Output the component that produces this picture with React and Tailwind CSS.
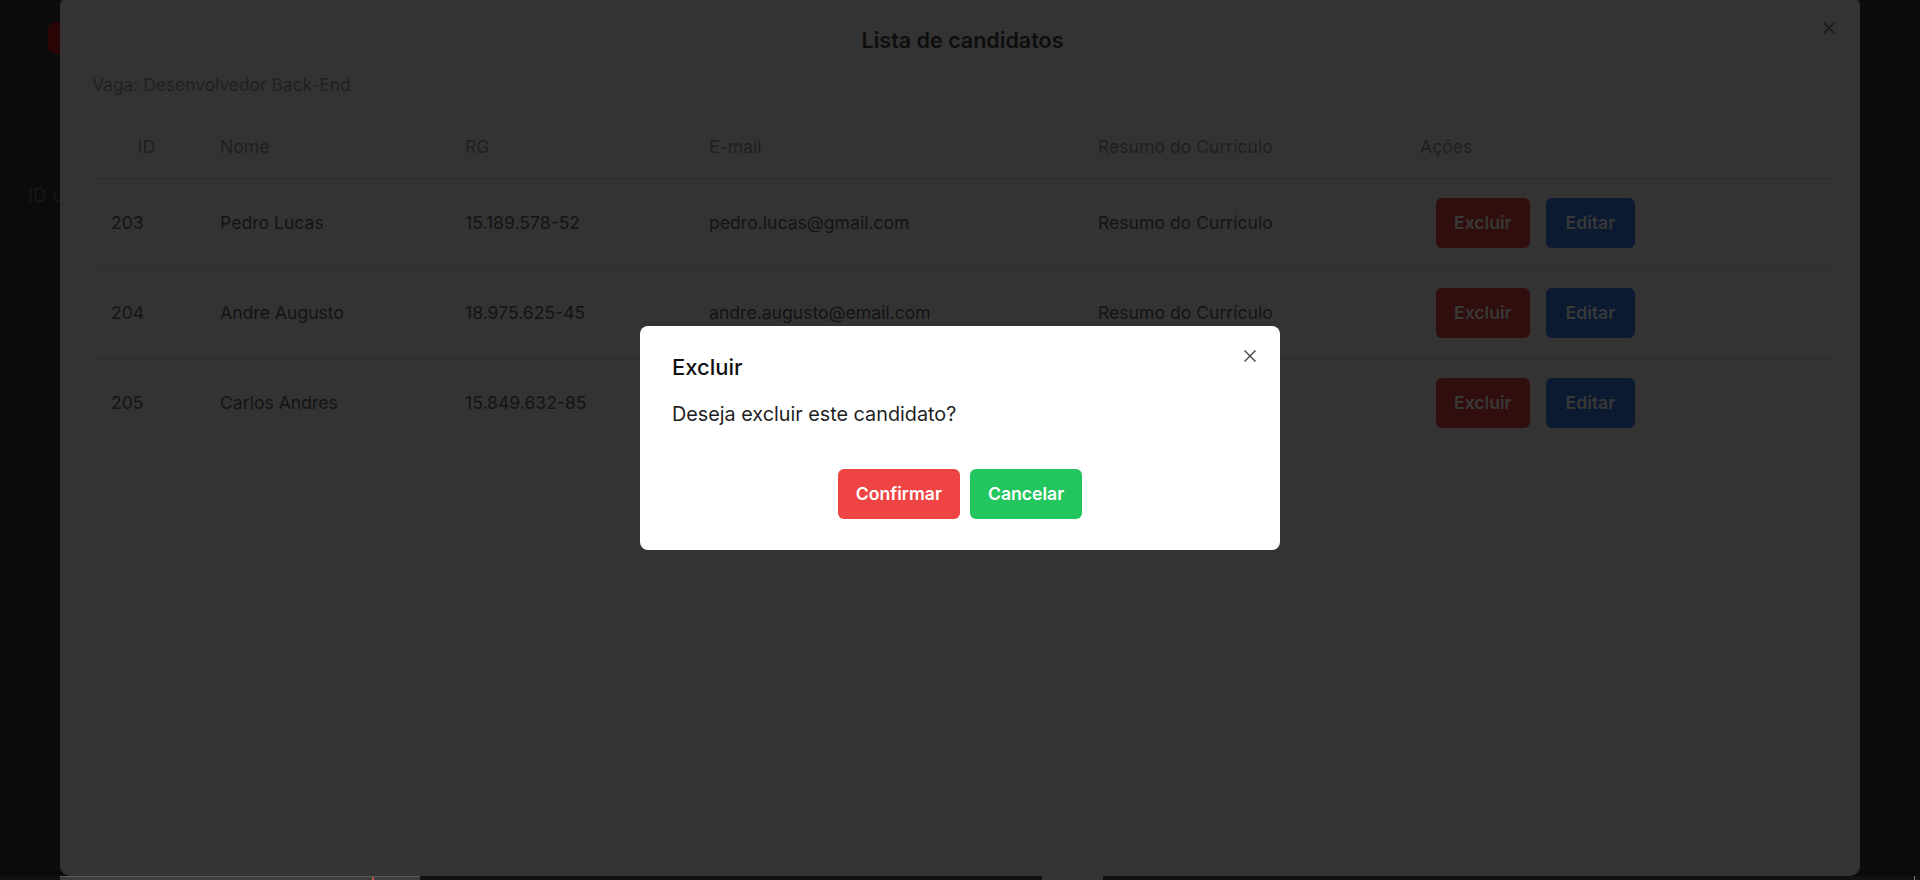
import React from "react";

const rows = [
  { id: "203", nome: "Pedro Lucas", rg: "15.189.578-52", email: "pedro.lucas@gmail.com", resumo: "Resumo do Currículo" },
  { id: "204", nome: "Andre Augusto", rg: "18.975.625-45", email: "andre.augusto@email.com", resumo: "Resumo do Currículo" },
  { id: "205", nome: "Carlos Andres", rg: "15.849.632-85", email: "carlos.andres@email.com", resumo: "Resumo do Currículo" },
];

function XIcon({ className }) {
  return (
    <svg viewBox="0 0 12 12" className={className} fill="none" stroke="currentColor" strokeWidth="1.4" strokeLinecap="square">
      <path d="M1 1 L11 11 M11 1 L1 11" />
    </svg>
  );
}

export default function App() {
  return (
    <div className="relative h-[880px] w-[1920px] overflow-hidden bg-[#0b0b0b] font-['Inter','Noto_Sans',sans-serif]">
      {/* background page (dimmed) */}
      <div className="flex h-[876px] flex-col">
        <div className="pl-[48px] pt-[22px]">
          <div className="h-[32px] w-[40px] rounded-[8px] bg-[#2a0505]" />
        </div>
        <div className="pl-[28px] pt-[128px] text-[19px] leading-7 text-[#171717]">ID da vaga</div>
      </div>
      <div className="flex h-[4px] w-full bg-[#111111]">
        <div className="relative ml-[60px] h-[4px] w-[360px] border-t border-[#5a5a5a] bg-[#3d3d3d]">
          <div className="absolute left-[312px] top-0 h-[3px] w-[2px] bg-[#c0504d]" />
        </div>
        <div className="ml-[622px] h-[4px] w-[61px] bg-[#333333]" />
        <div className="ml-auto mr-[5px] h-[4px] w-[1px] bg-[#777777]" />
      </div>

      {/* large modal: Lista de candidatos */}
      <div className="absolute left-[60px] top-[-4px] h-[880px] w-[1800px] rounded-[10px] bg-[#333333] pl-8 pr-[27px] pt-[30px]">
        <button className="absolute right-[25px] top-[26px] text-[#161616]">
          <XIcon className="h-[12px] w-[12px]" />
        </button>
        <h2 className="text-center text-[21.5px] font-semibold leading-7 text-[#0e0e0e]">Lista de candidatos</h2>
        <p className="mt-[19px] text-[17.4px] leading-6 text-[#212121]">Vaga: Desenvolvedor Back-End</p>
        <table className="mt-[19px] w-[1741px] table-fixed border-collapse text-[17.6px] text-[#141414]">
          <colgroup>
            <col className="w-[112px]" />
            <col className="w-[245px]" />
            <col className="w-[244px]" />
            <col className="w-[389px]" />
            <col className="w-[322px]" />
            <col className="w-[429px]" />
          </colgroup>
          <thead>
            <tr className="h-[62px] border-b border-[#2d2d2d] text-[#1f1f1f]">
              <th className="pl-[13px] pr-4 text-center font-normal">ID</th>
              <th className="px-4 text-left font-normal">Nome</th>
              <th className="px-4 text-left font-normal">RG</th>
              <th className="px-4 text-left font-normal">E-mail</th>
              <th className="px-4 text-left font-normal">Resumo do Currículo</th>
              <th className="px-4 text-left font-normal">Ações</th>
            </tr>
          </thead>
          <tbody>
            {rows.map((r, i) => (
              <tr key={r.id} className={i < 2 ? "h-[90px] border-b border-[#2d2d2d]" : "h-[90px]"}>
                <td className="pl-[19px] pr-4">{r.id}</td>
                <td className="px-4">{r.nome}</td>
                <td className="px-4">{r.rg}</td>
                <td className="px-4">{r.email}</td>
                <td className="px-4">{r.resumo}</td>
                <td className="px-4">
                  <div className="ml-4 flex gap-4">
                    <button className="h-[50px] rounded-md bg-[#300e0e] px-[18px] text-[17.6px] font-semibold text-[#383838]">Excluir</button>
                    <button className="h-[50px] rounded-md bg-[#0c1a31] px-[20px] text-[17.6px] font-semibold text-[#383838]">Editar</button>
                  </div>
                </td>
              </tr>
            ))}
          </tbody>
        </table>
      </div>

      {/* confirm dialog */}
      <div className="absolute left-[640px] top-[326px] h-[224px] w-[640px] rounded-lg bg-white px-8 pt-[27px]">
        <button className="absolute right-[24px] top-[24px] text-[#444444]">
          <XIcon className="h-[12px] w-[12px]" />
        </button>
        <h3 className="text-[22px] font-medium leading-7 text-[#111111]">Excluir</h3>
        <p className="mt-[19px] text-[19.8px] leading-7 text-[#1f1f1f]">Deseja excluir este candidato?</p>
        <div className="mt-[41px] flex justify-center gap-[10px]">
          <button className="h-[50px] rounded-md bg-[#ef4444] px-[18px] text-[17.6px] font-semibold text-white">Confirmar</button>
          <button className="h-[50px] rounded-md bg-[#22c55e] px-[18px] text-[17.6px] font-semibold text-white">Cancelar</button>
        </div>
      </div>
    </div>
  );
}
